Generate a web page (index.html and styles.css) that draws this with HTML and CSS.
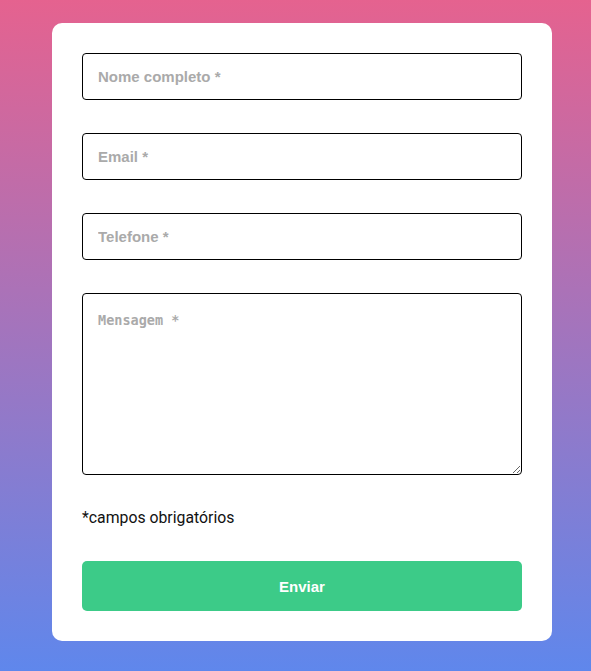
FILE: index.html
```html
<!DOCTYPE html>
<html lang="pt">
<head>
<meta charset="utf-8">
<title>Contato</title>
<link rel="stylesheet" href="styles.css">
</head>
<body>
<form class="card">
  <input class="field" type="text" placeholder="Nome completo *">
  <input class="field" type="email" placeholder="Email *">
  <input class="field" type="tel" placeholder="Telefone *">
  <textarea class="field area" placeholder="Mensagem *"></textarea>
  <p class="note">*campos obrigatórios</p>
  <button class="send" type="button">Enviar</button>
</form>
</body>
</html>
```
FILE: styles.css
```css
html {
  min-height: 100%;
  background: linear-gradient(to bottom, #e5628f 0%, #5f87ec 100%);
}
body {
  margin: 0;
  min-height: 671px;
  padding: 23px 0 0 52px;
  box-sizing: border-box;
  font-family: "Liberation Sans", Arial, sans-serif;
}
.card {
  width: 500px;
  box-sizing: border-box;
  background: #fff;
  border-radius: 10px;
  padding: 30px;
  display: flex;
  flex-direction: column;
}
.field {
  box-sizing: border-box;
  width: 440px;
  height: 47px;
  margin: 0 0 33px;
  padding: 0 15px;
  border: 1px solid #000;
  border-radius: 4px;
  font-family: "Liberation Sans", Arial, sans-serif;
  font-size: 15px;
  font-weight: bold;
  color: #333;
  background: #fff;
  outline: none;
}
.field::placeholder {
  color: #aaa;
  opacity: 1;
}
.area {
  height: 182px;
  padding: 18px 15px 15px;
  margin-bottom: 0;
  font-family: "DejaVu Sans Mono", monospace;
  font-size: 13.5px;
  resize: vertical;
}
.note {
  margin: 33px 0 34px;
  font-family: Roboto, "Liberation Sans", sans-serif;
  font-size: 15.8px;
  line-height: 19px;
  color: #111;
}
.send {
  height: 50px;
  border: none;
  border-radius: 5px;
  background: #3ccb88;
  color: #fff;
  font-family: "Liberation Sans", Arial, sans-serif;
  font-size: 15px;
  font-weight: bold;
  cursor: pointer;
}
```
